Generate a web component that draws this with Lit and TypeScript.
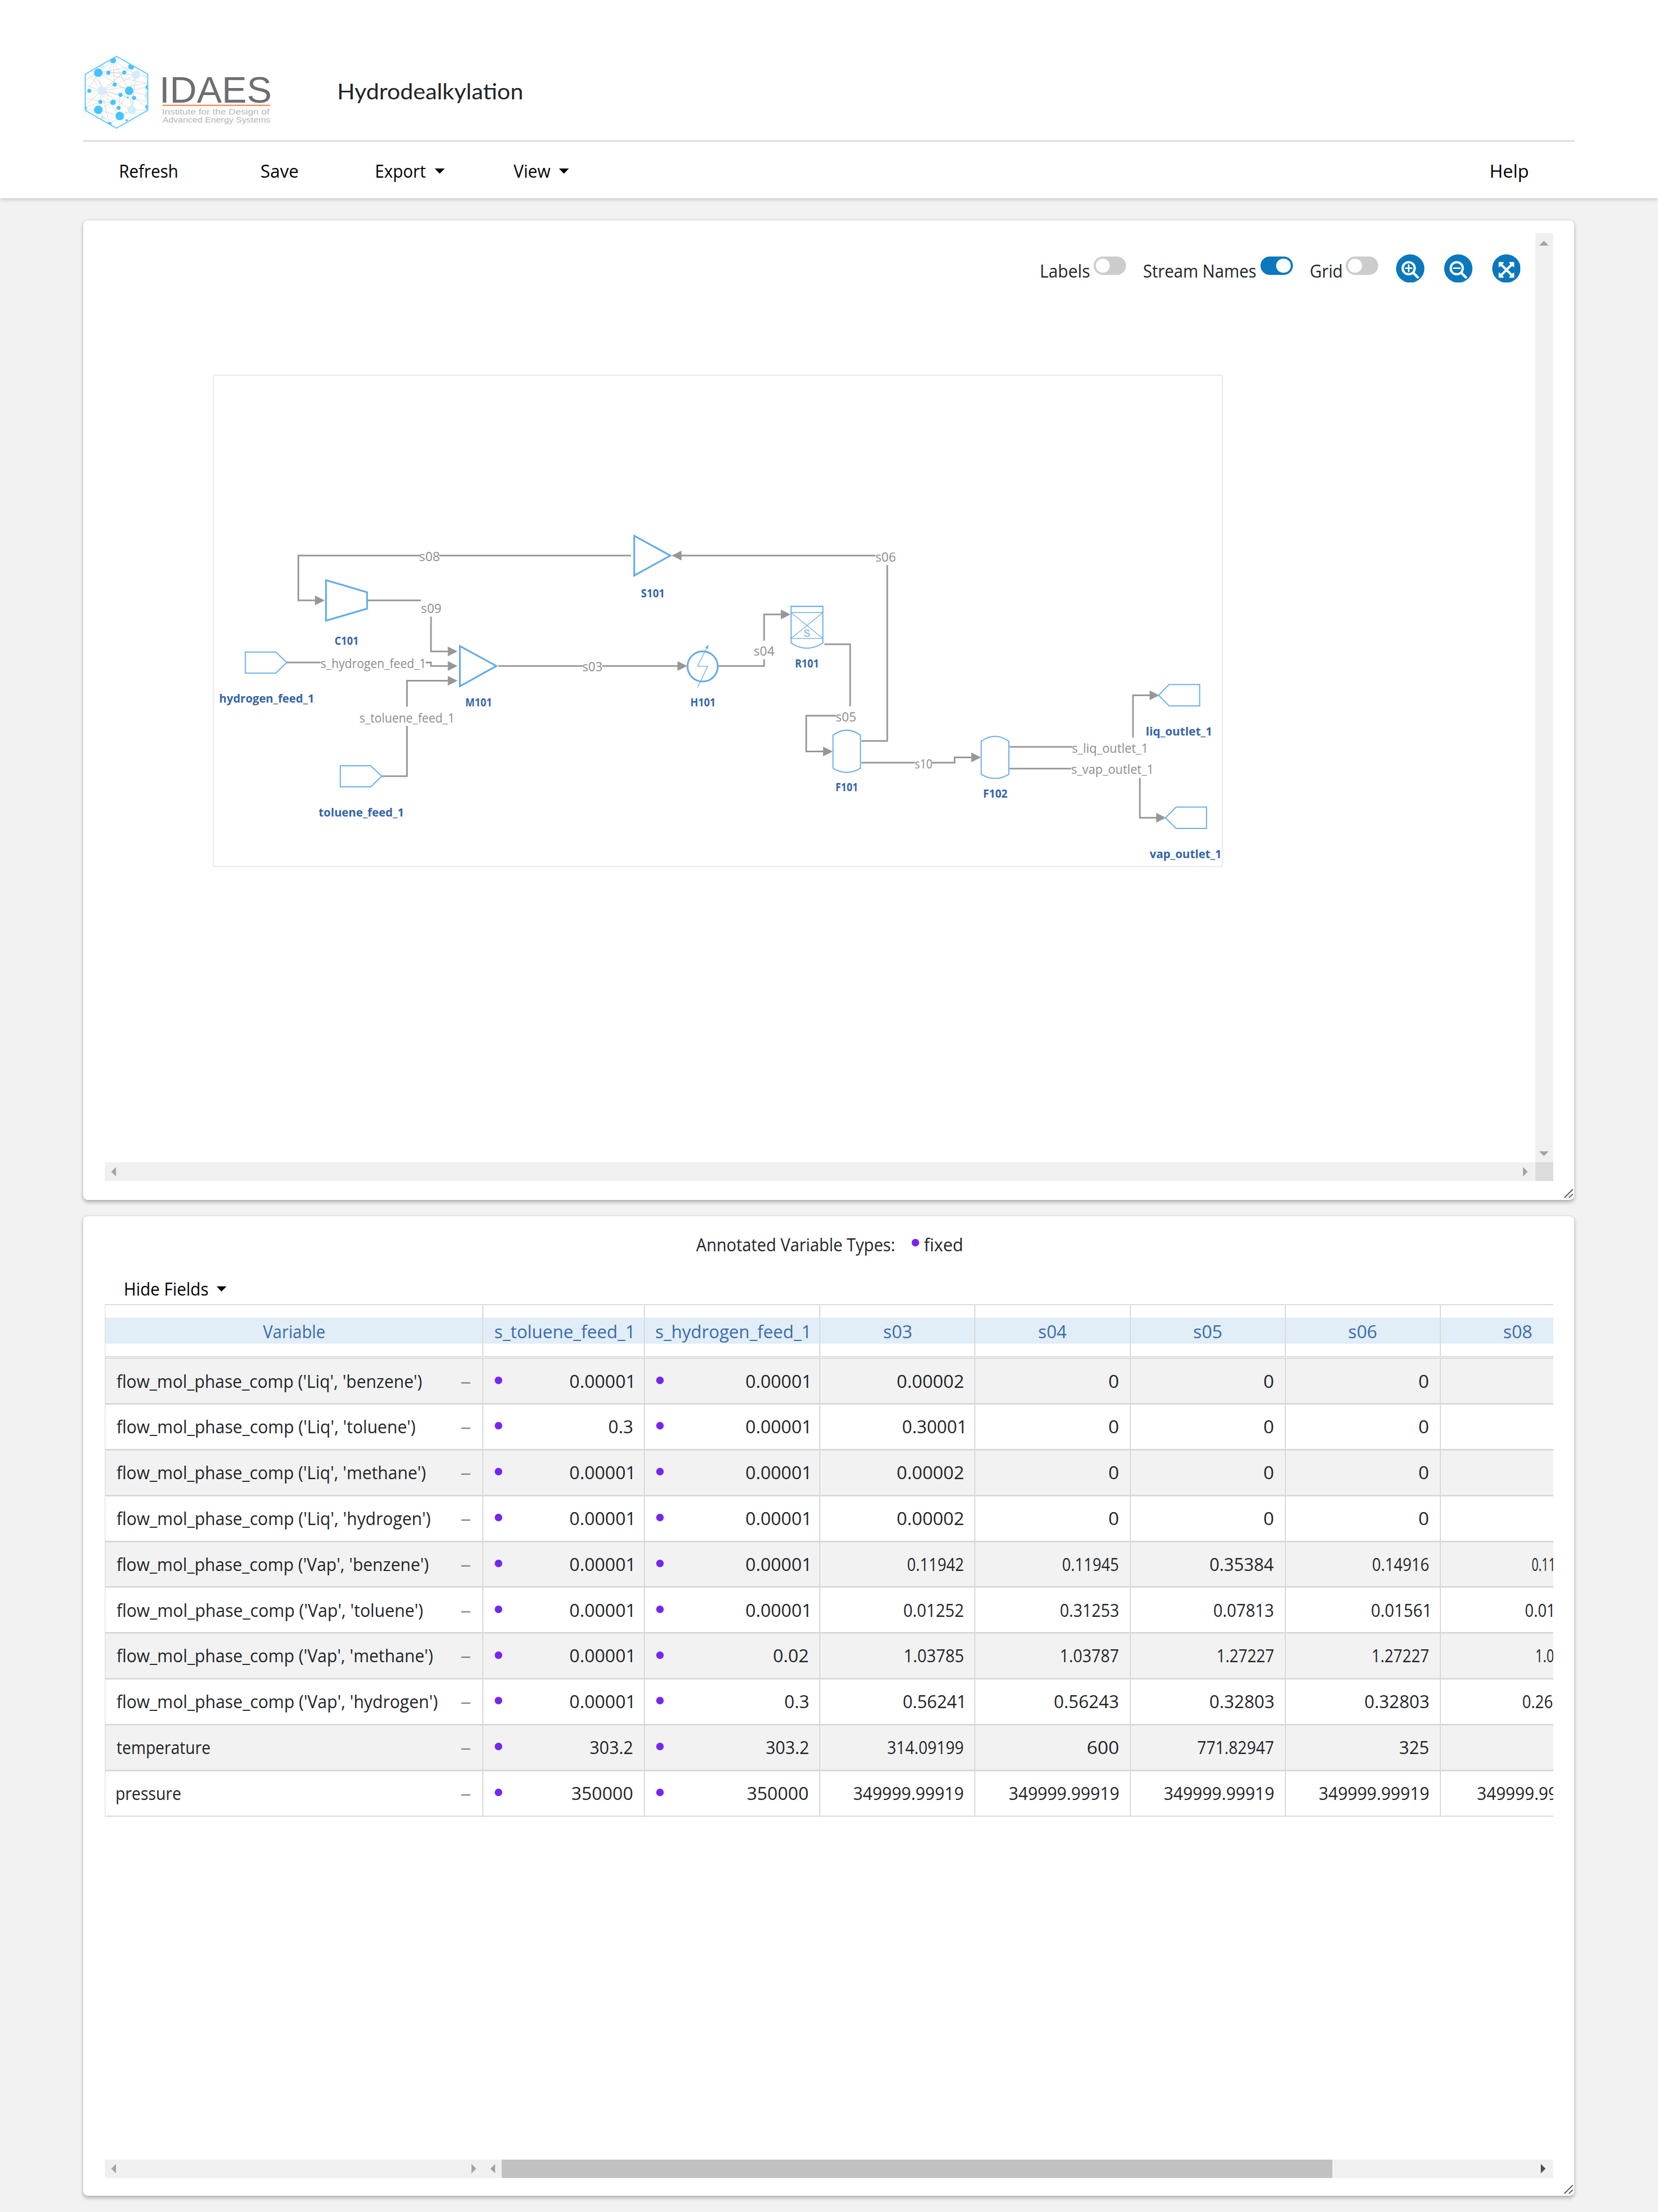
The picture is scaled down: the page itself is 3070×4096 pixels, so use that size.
import { LitElement, html, svg, css, nothing } from "lit";
import { customElement, property } from "lit/decorators.js";

/** Single line of text whose inked glyphs span exactly `w` pixels. */
@customElement("fit-text")
class FitText extends LitElement {
  @property() text = "";
  @property({ type: Number }) w = 0;

  static styles = css`
    :host { display: inline-block; flex: none; line-height: 50px; text-align: left; white-space: nowrap; }
    .box { display: block; }
    .glyphs { display: inline-block; transform-origin: 0 50%; white-space: pre; }
  `;

  render() {
    return html`<span class="box" style="width:${this.w}px"><span class="glyphs">${this.text}</span></span>`;
  }

  updated() {
    const el = this.renderRoot.querySelector<HTMLElement>(".glyphs")!;
    const cs = getComputedStyle(el);
    const ctx = document.createElement("canvas").getContext("2d")!;
    ctx.font = `${cs.fontWeight} 100px ${cs.fontFamily}`;
    const m = ctx.measureText(this.text);
    const left = -m.actualBoundingBoxLeft / 100;
    const ink = (m.actualBoundingBoxRight + m.actualBoundingBoxLeft) / 100;
    const size = Number(this.dataset.size ?? 38);
    const k = this.w / (ink * size);
    el.style.transform = `translateX(${-left * k}em) scaleX(${k})`;
  }
}

type Dir = "up" | "down" | "left" | "right";
const arrow = (d: Dir, dark = false) => {
  const pts = { up: "0,10 10,0 20,10", down: "0,0 10,10 20,0", left: "10,0 0,10 10,20", right: "0,0 10,10 0,20" }[d];
  const v = d === "up" || d === "down";
  return html`<svg class="sb-arrow" width=${v ? 20 : 10} height=${v ? 10 : 20}>
    <polygon points=${pts} fill=${dark ? "#505050" : "#a3a3a3"}></polygon></svg>`;
};

/* ---------- logo ---------- */
const logoLinks = [
  [268, 112, 174, 191], [268, 112, 238, 191], [268, 112, 278, 266], [268, 112, 413, 205], [268, 112, 370, 306],
  [383, 152, 174, 191], [383, 152, 195, 306], [383, 152, 488, 220], [174, 191, 339, 189], [174, 191, 370, 306],
  [174, 191, 488, 260], [174, 191, 91, 240], [174, 191, 91, 330], [174, 191, 195, 306], [413, 205, 370, 306],
  [413, 205, 195, 306], [413, 205, 386, 427], [413, 205, 488, 218], [339, 189, 195, 306], [110, 190, 195, 306],
  [195, 306, 117, 306], [195, 306, 91, 268], [195, 306, 91, 400], [195, 306, 187, 376], [195, 306, 315, 331],
  [195, 306, 488, 258], [195, 306, 488, 375], [195, 306, 386, 427], [195, 306, 310, 466], [195, 306, 245, 515],
  [278, 266, 370, 306], [370, 306, 488, 280], [370, 306, 480, 335], [370, 306, 268, 379], [370, 306, 303, 414],
  [370, 306, 401, 351], [370, 306, 386, 427], [401, 351, 480, 410], [401, 351, 386, 427], [315, 331, 303, 414],
  [268, 379, 187, 376], [268, 379, 174, 427], [268, 379, 310, 466], [187, 376, 91, 415], [187, 376, 91, 350],
  [187, 376, 174, 427], [174, 427, 91, 428], [174, 427, 310, 466], [174, 427, 245, 515], [386, 427, 310, 466],
  [386, 427, 488, 430], [310, 466, 355, 493], [413, 205, 238, 191], [130, 178, 240, 345], [386, 427, 245, 515],
];
const logoDots: [number, number, number, string][] = [
  [198, 150, 13, "#d3edfb"], [413, 205, 27, "#d3edfb"], [195, 306, 27, "#d3edfb"], [386, 427, 27, "#d3edfb"],
  [493, 337, 27, "#d3edfb"], [202, 474, 13, "#d3edfb"], [268, 112, 19, "#45c5ff"], [383, 152, 19, "#45c5ff"],
  [174, 191, 27, "#45c5ff"], [238, 191, 13, "#45c5ff"], [339, 189, 13, "#45c5ff"], [278, 266, 13, "#45c5ff"],
  [117, 306, 13, "#45c5ff"], [370, 306, 27, "#45c5ff"], [315, 331, 13, "#45c5ff"], [361, 349, 6, "#45c5ff"],
  [401, 351, 13, "#45c5ff"], [187, 376, 13, "#45c5ff"], [268, 379, 17, "#45c5ff"], [303, 414, 13, "#45c5ff"],
  [174, 427, 27, "#45c5ff"], [310, 466, 27, "#45c5ff"], [355, 493, 7, "#45c5ff"], [245, 518, 14, "#45c5ff"],
  [491, 283, 17, "#45c5ff"], [488, 409, 15, "#45c5ff"], [90, 415, 11, "#45c5ff"],
];
const logo = html`<svg class="logo" width="414" height="190" viewBox="78 0 1242 570">
  <defs><clipPath id="hex"><polygon points="289,84 488,200 488,430 289,543 91,430 91,200"></polygon></clipPath></defs>
  <g clip-path="url(#hex)">
    ${logoLinks.map(([a, b, c, d]) => svg`<line x1=${a} y1=${b} x2=${c} y2=${d} stroke="#cfcfcf" stroke-width="3"></line>`)}
    ${logoDots.map(([x, y, r, f]) => svg`<circle cx=${x} cy=${y} r=${r} fill=${f}></circle>`)}
  </g>
  <polygon points="289,86 488,200 488,430 289,543 91,430 91,200" fill="none" stroke="#64cdfb" stroke-width="7"></polygon>
  <g font-family="'Liberation Sans', sans-serif">
    <text x="562" y="380" font-size="232" fill="#6d6e71" textLength="714" lengthAdjust="spacingAndGlyphs">IDAES</text>
    <text x="579" y="456" font-size="52" fill="#b4b6b8" textLength="682" lengthAdjust="spacingAndGlyphs">Institute for the Design of</text>
    <text x="582" y="506" font-size="52" fill="#b4b6b8" textLength="685" lengthAdjust="spacingAndGlyphs">Advanced Energy Systems</text>
  </g>
  <rect x="582" y="394" width="684" height="8" fill="#f5874f"></rect>
</svg>`;

/* ---------- flowsheet ---------- */
const wires = [
  "M1336 1176.3H930", "M889 1176.3H631.8V1271.3H668",
  "M777 1271.3H891.6", "M912.6 1305.5V1379.3H948",
  "M607 1402.7H679", "M901.4 1402.7H912.6V1410H948",
  "M808.6 1643.4H861.7V1537", "M861.7 1496.3V1441.3H948",
  "M1055 1410H1234", "M1275 1410H1435",
  "M1520.8 1410H1617.8V1396.2", "M1617.8 1356.7V1300.8H1654",
  "M1745.3 1364H1799.9V1495.5", "M1769.8 1515.4H1707V1590.9H1743",
  "M1823.9 1568.8H1878.5V1196.3", "M1853.5 1176.3H1442",
  "M1823.9 1614.7H1936.8", "M1973.2 1614.7H2021.2V1603.7H2057",
  "M2137.5 1581.3H2270.3", "M2398.8 1561.7V1472H2435",
  "M2137.5 1627.3H2268", "M2413.3 1647V1731.3H2450",
];
const heads: [number, number, number][] = [
  [687.6, 1271.3, 1], [968.8, 1379.3, 1], [968.8, 1410, 1], [968.8, 1441.3, 1], [1455, 1410, 1], [1673.9, 1300.8, 1],
  [1763.2, 1590.9, 1], [1422.3, 1176.3, -1], [2077, 1603.7, 1], [2454.5, 1472, 1], [2468.6, 1731.3, 1],
];
const streams: [string, number, number, number][] = [
  ["s08", 889, 930, 1188.5], ["s09", 893, 933, 1297.3], ["s_hydrogen_feed_1", 680.4, 901, 1414.8],
  ["s_toluene_feed_1", 762.6, 961.2, 1529.3], ["s06", 1855, 1895.3, 1189], ["s03", 1234.6, 1274.4, 1421.3],
  ["s04", 1597.3, 1638.2, 1388], ["s05", 1770.8, 1811.6, 1527.6], ["s10", 1938.3, 1972.7, 1627],
  ["s_liq_outlet_1", 2270.8, 2429.8, 1593.7], ["s_vap_outlet_1", 2269.4, 2441.4, 1639],
];
const units: [string, number, number, number][] = [
  ["C101", 709.9, 758.1, 1365.4], ["hydrogen_feed_1", 465.7, 664, 1487.7], ["M101", 986.7, 1040.3, 1495],
  ["toluene_feed_1", 676.4, 854, 1728.4], ["S101", 1358.6, 1406, 1264.8], ["H101", 1463.2, 1513.7, 1495],
  ["R101", 1684.6, 1732.6, 1412.7], ["F101", 1770.3, 1815.2, 1675.5], ["F102", 2082.7, 2131.7, 1688.7],
  ["liq_outlet_1", 2427.4, 2565, 1557.3], ["vap_outlet_1", 2435.6, 2585, 1816.7],
];
const flash = (x: number, y: number, w: number) =>
  `M${x} ${y + 10.5}Q${x + w / 2} ${y - 10.5} ${x + w} ${y + 10.5}V${y + 80.5}Q${x + w / 2} ${y + 98} ${x} ${y + 80.5}Z`;

const diagram = html`<svg class="paper" width="3028" height="1967" viewBox="222 494 3028 1967">
  <rect x="452" y="794.5" width="2136" height="1040" rx="3" fill="#fff" stroke="#ededed" stroke-width="3"></rect>
  <g fill="none" stroke="#979797" stroke-width="3.4">${wires.map((d) => svg`<path d=${d}></path>`)}</g>
  <g fill="#979797">${heads.map(([x, y, s]) => svg`<polygon points="${x},${y} ${x - 20.6 * s},${y - 10.3} ${x - 20.6 * s},${y + 10.3}"></polygon>`)}</g>
  <g fill="none" stroke="#60aaec" stroke-width="3.6">
    <path d="M690.3 1228.4L777.3 1254V1288.6L690.3 1314.2Z"></path>
    <path d="M973.8 1368L1051 1410L973.8 1453Z"></path>
    <path d="M1342.8 1134.3L1419.3 1176.3L1342.8 1218.8Z"></path>
    <circle cx="1487.7" cy="1411" r="32"></circle>
  </g>
  <g fill="none" stroke="#66adee" stroke-width="2.3">
    <path d="M519.7 1380.6H584L607.5 1402.7L584 1425.2H519.7Z"></path>
    <path d="M720.6 1621.3H784.9L808.6 1643.4L784.9 1665.9H720.6Z"></path>
    <path d="M2453 1472L2475.4 1449.3H2539.9V1494.8H2475.4Z"></path>
    <path d="M2467.4 1731.3L2490 1708.7H2554.4V1754H2490Z"></path>
    <path d="M1674.9 1283.9H1742.2V1361.5Q1708.5 1383 1674.9 1361.5Z"></path>
    <path d=${flash(1763.7, 1546, 58)}></path>
    <path d=${flash(2077.4, 1559, 58.6)}></path>
  </g>
  <g fill="none" stroke="#66adee" stroke-width="1.5">
    <path d="M1674.9 1296.9H1742.2M1674.9 1352H1742.2M1674.9 1297L1742 1351.6M1742.2 1297L1675 1351.6"></path>
    <path d="M1495.5 1373L1477 1410.5H1498.4L1477 1455.6"></path>
  </g>
  <polygon points="1500,1364.5 1499,1374 1493,1371.5" fill="#60aaec"></polygon>
  <text x="1708.6" y="1347.6" font-size="21" text-anchor="middle" fill="#60aaec" font-family="'Liberation Sans', sans-serif">S</text>
  <g class="stream">${streams.map(([t, a, b, y]) => svg`<text x=${a - 1.5} y=${y} textLength=${b - a + 3} lengthAdjust="spacingAndGlyphs">${t}</text>`)}</g>
  <g class="unit">${units.map(([t, a, b, y]) => svg`<text x=${a - 1.5} y=${y} textLength=${b - a + 3} lengthAdjust="spacingAndGlyphs">${t}</text>`)}</g>
</svg>`;

/* ---------- stream table ---------- */
const widths: Record<string, number> = {
  "0": 19, "0.00001": 131, "0.3": 49, "0.02": 72, "0.00002": 139, "0.30001": 128, "303.2": 89, "350000": 128,
  "0.11942": 117, "0.11945": 117, "0.35384": 134, "0.14916": 118, "0.01252": 125, "0.31253": 122, "0.07813": 125,
  "0.01561": 120, "1.03785": 123, "1.03787": 121, "1.27227": 118, "0.56241": 126, "0.56243": 134, "0.32803": 134,
  "314.09199": 159, "600": 65, "771.82947": 160, "325": 60, "349999.99919": 231,
  "0.11": 44, "0.01": 56, "1.0": 36, "0.26": 62, "349999.99": 168,
};
const columns: [string, number][] = [
  ["Variable", 130], ["s_toluene_feed_1", 289], ["s_hydrogen_feed_1", 321],
  ["s03", 58], ["s04", 58], ["s05", 58], ["s06", 58], ["s08", 58],
];
const rows: [string, number, string[]][] = [
  ["flow_mol_phase_comp ('Liq', 'benzene')", 646, ["0.00001", "0.00001", "0.00002", "0", "0", "0", ""]],
  ["flow_mol_phase_comp ('Liq', 'toluene')", 632, ["0.3", "0.00001", "0.30001", "0", "0", "0", ""]],
  ["flow_mol_phase_comp ('Liq', 'methane')", 654, ["0.00001", "0.00001", "0.00002", "0", "0", "0", ""]],
  ["flow_mol_phase_comp ('Liq', 'hydrogen')", 664, ["0.00001", "0.00001", "0.00002", "0", "0", "0", ""]],
  ["flow_mol_phase_comp ('Vap', 'benzene')", 660, ["0.00001", "0.00001", "0.11942", "0.11945", "0.35384", "0.14916", "0.11"]],
  ["flow_mol_phase_comp ('Vap', 'toluene')", 648, ["0.00001", "0.00001", "0.01252", "0.31253", "0.07813", "0.01561", "0.01"]],
  ["flow_mol_phase_comp ('Vap', 'methane')", 669, ["0.00001", "0.02", "1.03785", "1.03787", "1.27227", "1.27227", "1.0"]],
  ["flow_mol_phase_comp ('Vap', 'hydrogen')", 679, ["0.00001", "0.3", "0.56241", "0.56243", "0.32803", "0.32803", "0.26"]],
  ["temperature", 197, ["303.2", "303.2", "314.09199", "600", "771.82947", "325", ""]],
  ["pressure", 135, ["350000", "350000", "349999.99919", "349999.99919", "349999.99919", "349999.99919", "349999.99"]],
];
const clippedStart: Record<string, number> = { "0.11": 193, "0.01": 180, "1.0": 202, "0.26": 174, "349999.99": 78 };

const fit = (text: string, w: number) => html`<fit-text .text=${text} .w=${w}></fit-text>`;
const caret = html`<svg class="caret" width="21" height="11"><polygon points="0,0 21,0 10.5,11"></polygon></svg>`;
const grip = html`<svg class="grip" width="20" height="21"><path d="M1.5 18.5L18 2M11 18.5L18 12" stroke="#5c5c5c" stroke-width="2.4" stroke-linecap="round"></path></svg>`;

@customElement("app-root")
class AppRoot extends LitElement {
  static styles = css`
    :host { display: block; }
    .page {
      zoom: 0.874644; width: 3510px; height: 4683px; overflow: hidden; background: #f2f2f2;
      font-family: "Open Sans", "Noto Sans", sans-serif; font-size: 38px; color: #212529; box-sizing: border-box;
    }
    .page * { box-sizing: border-box; }
    svg { display: block; flex: none; }

    header { height: 420px; padding: 90px 176px 0; background: #fff; box-shadow: 0 2px 9px rgba(0, 0, 0, 0.2); }
    .brand { display: flex; align-items: flex-start; height: 210px; border-bottom: 2.4px solid #cfcfcf; }
    .title { font-family: Lato, sans-serif; font-size: 46px; margin: 78px 0 0 128px; }
    nav { display: flex; align-items: center; height: 50px; margin: 37px 99px 0 79px; color: #000; }
    .item { display: flex; align-items: center; }
    .item.save { margin-left: 178px; }
    .item.export { margin-left: 167px; }
    .item.view { margin-left: 146px; }
    .item.help { margin-left: auto; }
    .caret { margin-left: 19px; }

    main { display: flex; flex-direction: column; gap: 35px; padding: 46px 177px 0 176px; }
    .card {
      position: relative; height: 2074px; background: #fff; border-radius: 10px;
      box-shadow: 0 4px 9px rgba(0, 0, 0, 0.27), 0 0 3px rgba(0, 0, 0, 0.14);
    }
    .grip { position: absolute; right: 2px; bottom: 3px; }

    .viewer { display: grid; grid-template: 1967px 39px / 3028px 38px; padding: 28px 45px 0 46px; }
    .paper, .tools { grid-area: 1 / 1; }
    .tools { display: flex; align-items: flex-start; justify-self: end; padding: 44px 31px 0 0; }
    .tools fit-text { margin-top: 11px; }
    .toggle { width: 69px; height: 39px; margin: 5px 38px 0 9px; padding: 5px; border-radius: 20px; background: #ccc; display: flex; flex: none; }
    .toggle.on { background: #0b78be; justify-content: flex-end; }
    .knob { width: 30px; height: 30px; border-radius: 50%; background: #fff; }
    .round + .round { margin-left: 41.5px; }

    .bar { display: flex; align-items: center; justify-content: space-between; background: #f0f0f0; }
    .bar.v { grid-area: 1 / 2; flex-direction: column; padding: 16px 0 14px; }
    .bar.h { height: 39px; padding: 0 16px 0 14px; }
    .corner { background: #dcdcdc; }

    .stream { font-size: 26px; fill: #8c8c8c; }
    .unit { font-size: 25px; font-weight: 700; fill: #3565a8; }

    .sheet { display: flex; flex-direction: column; padding: 35px 45px 38px 46px; }
    .legend { display: flex; justify-content: center; height: 50px; }
    .dot { flex: none; width: 16px; height: 16px; border-radius: 50%; background: #7626ee; }
    .legend .dot { margin: 13px 10px 0 37px; }
    .hide { display: flex; align-items: center; height: 50px; margin: 44px 0 0 43px; color: #000; }
    .table { width: 3066px; margin-top: 7px; overflow: hidden; }
    .row {
      display: grid; width: 3160px; height: 97px; border-left: 2px solid #d9d9d9; border-bottom: 4px solid #d9d9d9;
      grid-template-columns: 800.6px 341.4px 372px 328.3px 328.3px 328.3px 328.3px 328.3px;
    }
    .row:nth-child(even) { background: #f2f2f2; }
    .row:nth-child(2) { height: 99px; border-top: 2.3px solid #d9d9d9; margin-top: 2px; }
    .row:last-child { height: 96px; border-bottom-width: 2.3px; }
    .row.head { height: 112px; border-top: 2.3px solid #dcdcdc; border-bottom: 2.3px solid #dcdcdc; color: #3a6aad; background: #fff; }
    .cell { display: flex; justify-content: space-between; align-items: flex-start; padding: 22px 24px 0 24px; border-right: 2.3px solid #d9d9d9; }
    .head .cell { justify-content: center; padding: 26px 0; }
    .band { display: flex; justify-content: center; flex: 1; height: 55px; padding-top: 5px; background: #e1eef7; }
    .num { justify-content: flex-end; }
    .marked { justify-content: space-between; }
    .cell .dot { margin-top: 15px; }
    .dash { color: #888; }
    .name { padding-right: 26px; }
    .clipped { justify-content: flex-start; padding-left: 0; padding-right: 0; }
    .bars { display: grid; grid-template-columns: 802px 2264px; margin-top: auto; }
    .thumb { width: 1759px; height: 39px; background: #c1c1c1; margin: 0 auto 0 14px; }
  `;

  private round(kind: "plus" | "minus" | "fit") {
    return html`<svg class="round" width="60" height="60" viewBox="0 0 180 180">
      <circle cx="90" cy="90" r="90" fill="#0b78be"></circle>
      ${kind === "fit"
        ? svg`<g fill="#fff" stroke="#fff" stroke-linejoin="round">
            <path d="M56 64L125 133M125 64L56 133" stroke-width="15"></path>
            <path d="M45 53H69L45 77ZM136 53V77L112 53ZM45 144V120L69 144ZM136 144H112L136 120Z" stroke-width="8"></path></g>`
        : svg`<g fill="none" stroke="#fff">
            <circle cx="80" cy="88" r="38.5" stroke-width="14"></circle>
            <path d="M112 120L138 146" stroke-width="16" stroke-linecap="round"></path>
            <path d=${kind === "plus" ? "M60 88H100M80 68V108" : "M60 88H100"} stroke-width="10" stroke-linecap="round"></path></g>`}
    </svg>`;
  }

  private cell(value: string, i: number) {
    if (i === 6) {
      return html`<div class="cell clipped">${value
        ? html`<span style="width:${clippedStart[value]}px;flex:none"></span>${fit(value, widths[value])}` : nothing}</div>`;
    }
    return html`<div class="cell ${i < 2 ? "marked" : "num"}">
      ${i < 2 ? html`<span class="dot"></span>` : nothing}${fit(value, widths[value])}</div>`;
  }

  render() {
    return html`<div class="page">
      <header>
        <div class="brand">${logo}<fit-text class="title" data-size="46" .text=${"Hydrodealkylation"} .w=${387}></fit-text></div>
        <nav>
          <div class="item">${fit("Refresh", 120)}</div>
          <div class="item save">${fit("Save", 77)}</div>
          <div class="item export">${fit("Export", 104)}${caret}</div>
          <div class="item view">${fit("View", 78)}${caret}</div>
          <div class="item help">${fit("Help", 78)}</div>
        </nav>
      </header>
      <main>
        <section class="card viewer">
          ${diagram}
          <div class="tools">
            ${fit("Labels", 102)}<span class="toggle"><span class="knob"></span></span>
            ${fit("Stream Names", 237)}<span class="toggle on"><span class="knob"></span></span>
            ${fit("Grid", 65)}<span class="toggle"><span class="knob"></span></span>
            ${this.round("plus")}${this.round("minus")}${this.round("fit")}
          </div>
          <div class="bar v">${arrow("up")}${arrow("down")}</div>
          <div class="bar h">${arrow("left")}${arrow("right")}</div>
          <div class="corner"></div>
          ${grip}
        </section>
        <section class="card sheet">
          <div class="legend">${fit("Annotated Variable Types:", 419)}<span class="dot"></span>${fit("fixed", 80)}</div>
          <div class="hide">${fit("Hide Fields", 175)}${caret}</div>
          <div class="table">
            <div class="row head">${columns.map(([t, w]) => html`<div class="cell"><div class="band">${fit(t, w)}</div></div>`)}</div>
            ${rows.map(([name, w, values]) => html`<div class="row">
              <div class="cell name">${fit(name, w)}<fit-text class="dash" .text=${"–"} .w=${19}></fit-text></div>
              ${values.map((v, i) => this.cell(v, i))}
            </div>`)}
          </div>
          <div class="bars">
            <div class="bar h">${arrow("left")}${arrow("right")}</div>
            <div class="bar h">${arrow("left")}<div class="thumb"></div>${arrow("right", true)}</div>
          </div>
          ${grip}
        </section>
      </main>
    </div>`;
  }
}
